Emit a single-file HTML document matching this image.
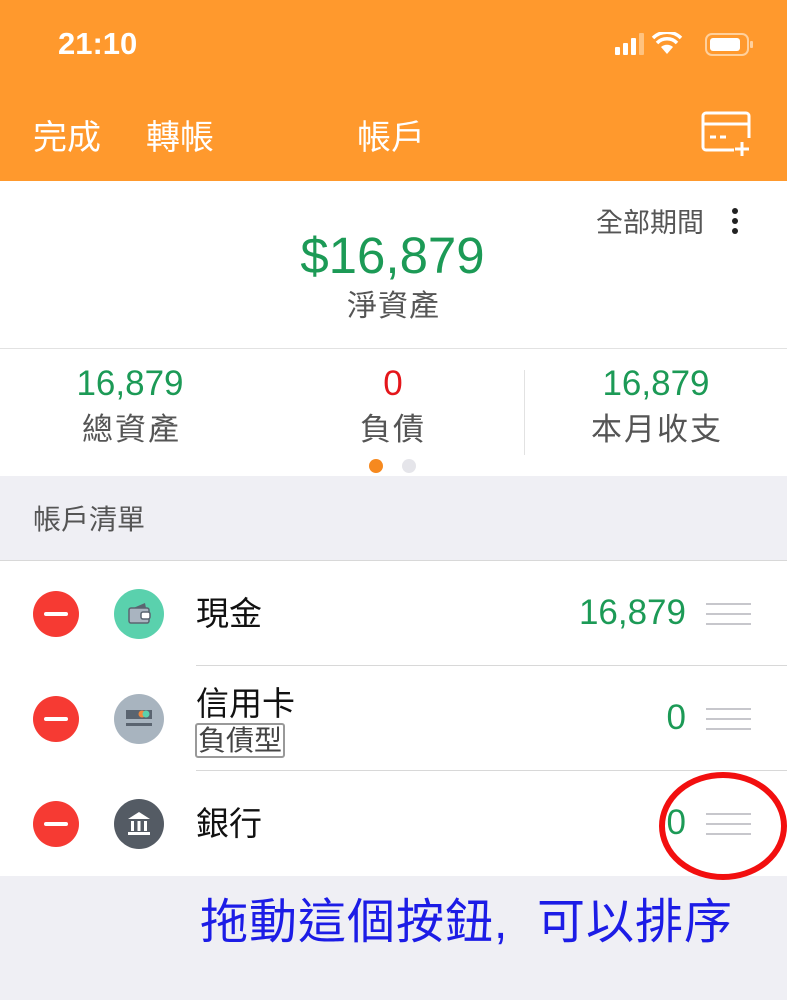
<!DOCTYPE html>
<html><head><meta charset="utf-8"><style>
body{margin:0;width:787px;height:1000px;overflow:hidden;background:#efeff4;font-family:"Liberation Sans","Noto Sans CJK TC",sans-serif;position:relative}
.a{position:absolute;white-space:nowrap}
.hdr{position:absolute;left:0;top:0;width:787px;height:181px;background:#ff992d}
.w{color:#fff}
.g{color:#1c9a56}
.row{position:absolute;left:0;width:787px;height:105px;background:#fff}
.minus{position:absolute;left:33px;width:46px;height:46px;border-radius:50%;background:#f63a33}
.minus:after{content:"";position:absolute;left:11px;top:21px;width:24px;height:4px;background:#fff;border-radius:2px}
.ic{position:absolute;left:114px;width:50px;height:50px;border-radius:50%}
.nm{position:absolute;left:196px;font-size:33px;color:#111}
.amt{position:absolute;right:101px;font-size:35px;color:#1c9a56}
.hd{position:absolute;left:706px;width:45px;height:18px;border-top:2px solid #c7c7cc;border-bottom:2px solid #c7c7cc}
.hd:after{content:"";position:absolute;left:0;top:8px;width:45px;height:2px;background:#c7c7cc}
.sep{position:absolute;left:196px;right:0;height:1px;background:#d8d8d8}
.lab{font-size:31px;color:#555;letter-spacing:2px}
</style></head><body>
<div class="hdr">
<div class="a w" style="left:58px;top:26px;font-size:31px;font-weight:bold">21:10</div>
<svg class="a" style="left:615px;top:32px" width="140" height="26">
<rect x="0" y="15" width="5" height="8" rx="1" fill="#fff"/><rect x="8" y="11" width="5" height="12" rx="1" fill="#fff"/><rect x="16" y="6" width="5" height="17" rx="1" fill="#fff"/><rect x="24" y="1" width="5" height="22" rx="1" fill="#ffc27f"/>
<path d="M52 22 L58 15 A9 9 0 0 0 46 15Z" fill="#fff"/><path d="M42 11 A14 14 0 0 1 62 11" stroke="#fff" stroke-width="3.5" fill="none"/><path d="M38 6 A20 20 0 0 1 66 6" stroke="#fff" stroke-width="3.5" fill="none"/>
<rect x="91" y="2" width="42" height="21" rx="6" fill="none" stroke="#ffd09c" stroke-width="2"/><rect x="95" y="6" width="30" height="13" rx="3" fill="#fff"/><rect x="135" y="9" width="3" height="7" rx="1" fill="#ffd09c"/>
</svg>
<div class="a w" style="left:33px;top:110px;font-size:34px">完成</div>
<div class="a w" style="left:146px;top:110px;font-size:34px">轉帳</div>
<div class="a w" style="left:357px;top:110px;font-size:34px">帳戶</div>
<svg class="a" style="left:700px;top:110px" width="56" height="48" fill="none" stroke="#fff" stroke-width="3">
<path d="M34 40 H6 a3 3 0 0 1 -3 -3 V6 a3 3 0 0 1 3 -3 H46 a3 3 0 0 1 3 3 V28"/><path d="M3 14 H49"/><path d="M10 27 H16 M20 27 H26"/><path d="M42 32 V46 M35 39 H49"/>
</svg>
</div>
<div class="a" style="left:0;top:181px;width:787px;height:295px;background:#fff"></div>
<div class="a" style="left:596px;top:201px;font-size:27px;color:#555">全部期間</div>
<svg class="a" style="left:730px;top:207px" width="10" height="30"><circle cx="5" cy="4" r="3" fill="#222"/><circle cx="5" cy="14" r="3" fill="#222"/><circle cx="5" cy="24" r="3" fill="#222"/></svg>
<div class="a g" style="left:0;width:785px;text-align:center;top:226px;font-size:51px">$16,879</div>
<div class="a" style="left:0;width:787px;text-align:center;top:281px;font-size:30px;color:#555;letter-spacing:1px">淨資產</div>
<div class="a" style="left:0;top:348px;width:787px;height:1px;background:#e2e2e2"></div>
<div class="a g" style="left:0;width:260px;text-align:center;top:364px;font-size:35px">16,879</div>
<div class="a lab" style="left:82px;top:404px">總資產</div>
<div class="a" style="left:262px;width:262px;text-align:center;top:364px;font-size:35px;color:#e4161b">0</div>
<div class="a lab" style="left:360px;top:404px">負債</div>
<div class="a g" style="left:525px;width:262px;text-align:center;top:364px;font-size:35px">16,879</div>
<div class="a lab" style="left:591px;top:404px">本月收支</div>
<div class="a" style="left:524px;top:370px;width:1px;height:85px;background:#e2e2e2"></div>
<div class="a" style="left:369px;top:459px;width:14px;height:14px;border-radius:50%;background:#f6891f"></div>
<div class="a" style="left:402px;top:459px;width:14px;height:14px;border-radius:50%;background:#e5e5ea"></div>
<div class="a" style="left:33px;top:498px;font-size:28px;color:#555">帳戶清單</div>
<div class="a" style="left:0;top:560px;width:787px;height:1px;background:#d8d8d8"></div>
<div class="row" style="top:561px">
<div class="minus" style="top:30px"></div>
<div class="ic" style="top:28px;background:#5ad1ad"><svg width="50" height="50"><path d="M17 20 L31 14 L32 19" fill="#5a6470"/><rect x="15" y="19" width="20" height="15" rx="2" fill="#a9b4c0" stroke="#5a6470" stroke-width="1.5"/><rect x="27" y="23" width="9" height="7" rx="2" fill="#fff" stroke="#5a6470" stroke-width="1.5"/></svg></div>
<div class="nm" style="top:26px">現金</div>
<div class="amt" style="top:32px">16,879</div>
<div class="hd" style="top:42px"></div>
</div>
<div class="sep" style="top:665px"></div>
<div class="row" style="top:666px">
<div class="minus" style="top:30px"></div>
<div class="ic" style="top:28px;background:#a8b4bf"><svg width="50" height="50"><rect x="12" y="16" width="26" height="9" fill="#5a6470"/><circle cx="28" cy="20" r="3.5" fill="#f0883e"/><circle cx="32" cy="20" r="3.5" fill="#5ad1ad"/><rect x="12" y="29" width="26" height="3" fill="#5a6470"/></svg></div>
<div class="nm" style="top:11px">信用卡</div>
<div class="a" style="left:195px;top:57px;font-size:28px;line-height:31px;color:#444;border:2px solid #999;border-radius:3px;padding:0 1px">負債型</div>
<div class="amt" style="top:32px">0</div>
<div class="hd" style="top:42px"></div>
</div>
<div class="sep" style="top:770px"></div>
<div class="row" style="top:771px">
<div class="minus" style="top:30px"></div>
<div class="ic" style="top:28px;background:#545b64"><svg width="50" height="50"><path d="M14 20 L25 13 L36 20Z" fill="#fff"/><rect x="17" y="22" width="3" height="10" fill="#fff"/><rect x="23.5" y="22" width="3" height="10" fill="#fff"/><rect x="30" y="22" width="3" height="10" fill="#fff"/><rect x="14" y="33" width="22" height="3" fill="#fff"/></svg></div>
<div class="nm" style="top:26px">銀行</div>
<div class="amt" style="top:32px">0</div>
<div class="hd" style="top:42px"></div>
</div>
<svg class="a" style="left:655px;top:768px" width="132" height="120"><ellipse cx="68" cy="58" rx="61" ry="51" fill="none" stroke="#f20f0f" stroke-width="6"/></svg>
<div class="a" style="left:200px;top:882px;font-size:48px;color:#1c1ce6;letter-spacing:1px">拖動這個按鈕, &nbsp;可以排序</div>
</body></html>
